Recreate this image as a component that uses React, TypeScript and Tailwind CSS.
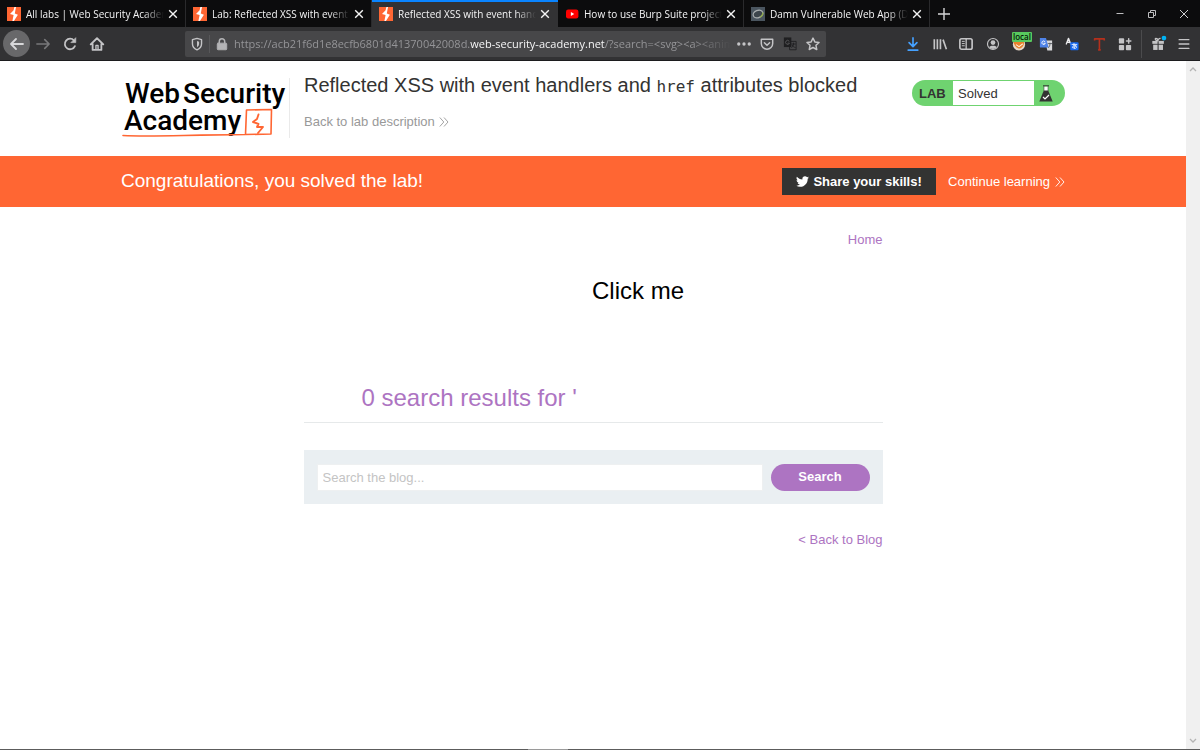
import React from "react";

const uiFont = "font-['Open_Sans','Noto_Sans',sans-serif]";

function BurpIcon() {
  return (
    <svg viewBox="0 0 14 14" className="size-[14px] shrink-0" aria-hidden="true">
      <rect width="14" height="14" fill="#ff6633" />
      <path d="M7.400 0 6.600 3.200 3 7l3.600 1L5.400 14h1.500l4-6.200L7.800 6.400 9 0Z" fill="#fff" />
    </svg>
  );
}

function YoutubeIcon() {
  return (
    <svg viewBox="0 0 14 14" className="size-[14px] shrink-0" aria-hidden="true">
      <rect x="1" y="2.6" width="12.4" height="8.8" rx="2.2" fill="#f00" />
      <path d="M5.9 5 L9.2 7 L5.9 9 Z" fill="#fff" />
    </svg>
  );
}

function DvwaIcon() {
  return (
    <svg viewBox="0 0 14 14" className="size-[14px] shrink-0" aria-hidden="true">
      <rect width="14" height="14" fill="#4a555f" />
      <ellipse cx="7" cy="7" rx="5" ry="3.600" transform="rotate(-22 7 7)" fill="#3c454c" stroke="#a9aeb0" strokeWidth="1.300" />
      <path d="M9 10.300 Q12 8.600 12 5.600" fill="none" stroke="#8fa84a" strokeWidth="1.300" />
    </svg>
  );
}

function CloseIcon() {
  return (
    <svg viewBox="0 0 10 10" className="size-[10px]" fill="none" stroke="#f4f4f4" strokeWidth="1.400" aria-hidden="true">
      <path d="M1.200 1.200 8.800 8.800M8.800 1.200 1.200 8.800" />
    </svg>
  );
}

const tabs = [
  { title: "All labs | Web Security Academy", icon: <BurpIcon /> },
  { title: "Lab: Reflected XSS with event handlers", icon: <BurpIcon /> },
  { title: "Reflected XSS with event handlers", icon: <BurpIcon />, active: true },
  { title: "How to use Burp Suite projects |", icon: <YoutubeIcon /> },
  { title: "Damn Vulnerable Web App (DVWA)", icon: <DvwaIcon /> },
];

function TabBar() {
  return (
    <div className="flex h-[27px] bg-[#0c0c0d]">
      {tabs.map((tab) => (
        <div
          key={tab.title}
          className={
            tab.active
              ? "flex w-[186px] items-center border-t-2 border-[#0a84ff] bg-[#323234] pr-2 pb-px pl-[7px]"
              : "flex w-[186px] items-center border-r border-[#2a2a2c] pt-px pr-[7px] pl-[7px]"
          }
        >
          {tab.icon}
          <button className="ml-[5px] h-5 min-w-0 flex-1 overflow-hidden text-left text-[10px] leading-5 whitespace-nowrap text-[#f4f4f5] mask-r-from-85% mask-r-to-100%">
            {tab.title}
          </button>
          <button aria-label="Close tab" className="ml-1 shrink-0">
            <CloseIcon />
          </button>
        </div>
      ))}
      <button aria-label="New tab" className="ml-2">
        <svg viewBox="0 0 12 12" className="size-3" stroke="#d6d6d8" strokeWidth="1.400" aria-hidden="true">
          <path d="M6 0V12M0 6H12" />
        </svg>
      </button>
      <div className="ml-auto flex items-center gap-[22px] pr-[11px]">
        <button aria-label="Minimize">
          <svg viewBox="0 0 10 10" className="size-[10px]" stroke="#bdbdbf" aria-hidden="true"><path d="M1.500 4.500H8.500" /></svg>
        </button>
        <button aria-label="Restore">
          <svg viewBox="0 0 10 10" className="size-[10px]" stroke="#bdbdbf" fill="none" aria-hidden="true">
            <path d="M1.500 3.500h5v5h-5zM3.500 3.500v-2h5v5h-2" />
          </svg>
        </button>
        <button aria-label="Close window">
          <svg viewBox="0 0 10 10" className="size-[10px]" stroke="#d0d0d2" aria-hidden="true"><path d="M1 1 9 9M9 1 1 9" /></svg>
        </button>
      </div>
    </div>
  );
}

type IconProps = { label: string; children: React.ReactNode };

function ToolButton({ label, children }: IconProps) {
  return (
    <button aria-label={label} className="shrink-0">
      <svg viewBox="0 0 16 16" className="size-[14px] overflow-visible" fill="none" stroke="#c4c4c6" strokeWidth="1.700" strokeLinecap="round" strokeLinejoin="round" aria-hidden="true">
        {children}
      </svg>
    </button>
  );
}

function Toolbar() {
  return (
    <div className="flex h-[34px] items-center border-b border-[#1c1c1e] bg-[#323234] pr-[9px] pl-[3px]">
      <button aria-label="Back" className="flex size-[27px] items-center justify-center rounded-full bg-[#68686a]">
        <svg viewBox="0 0 16 16" className="size-4" fill="none" stroke="#d8d8da" strokeWidth="1.800" strokeLinecap="round" strokeLinejoin="round" aria-hidden="true">
          <path d="M14 8H2M7 3 2 8l5 5" />
        </svg>
      </button>
      <div className="ml-[6px] flex items-center gap-[13px]">
        <button aria-label="Forward">
          <svg viewBox="0 0 16 16" className="size-[14px]" fill="none" stroke="#78787a" strokeWidth="1.800" strokeLinecap="round" strokeLinejoin="round" aria-hidden="true">
            <path d="M1 8H15M10 3l5 5-5 5" />
          </svg>
        </button>
        <ToolButton label="Reload">
          <path d="M13.600 10.400A6 6 0 1 1 12.600 4" strokeWidth="2" />
          <path d="M14.600 1.200V6.400H9.400Z" fill="#c4c4c6" strokeWidth="0.800" />
        </ToolButton>
        <ToolButton label="Home">
          <path d="M.8 8.400 8 1.400l7.200 7M3 8v6.800h10V8" strokeWidth="2.100" />
          <path d="M6.800 14V9.600h2.400V14" strokeWidth="1.600" />
        </ToolButton>
      </div>
      <div className="ml-[81px] flex h-[26px] min-w-0 flex-1 items-center rounded-[2px] bg-[#474749] pr-[6px] pl-[5px]">
        <ToolButton label="Tracking protection">
          <path d="M8 1.600 13.200 3v4.600c0 3.400-2.200 5.600-5.200 7-3-1.400-5.200-3.600-5.200-7V3Z" strokeWidth="1.600" />
          <path d="M8 4.600v7c1.500-1 2.400-2.200 2.400-4V5.300Z" fill="#c4c4c6" stroke="none" />
        </ToolButton>
        <div className="mx-[5px] h-[18px] w-px bg-[#58585a]" />
        <ToolButton label="Site information">
          <rect x="2.600" y="7" width="10.800" height="7.600" rx="1" fill="#b4b4b6" stroke="#b4b4b6" strokeWidth="1" />
          <path d="M4.900 7V5a3.100 3.100 0 0 1 6.200 0v2" stroke="#b4b4b6" />
        </ToolButton>
        <div className="ml-[5px] min-w-0 flex-1 overflow-hidden text-[11px] leading-5 whitespace-nowrap text-[#949497] mask-r-from-92% mask-r-to-100%">
          https://acb21f6d1e8ecfb6801d41370042008d.<span className="text-[#f5f5f6]">web-security-academy.net</span>/?search=&lt;svg&gt;&lt;a&gt;&lt;animate
        </div>
        <div className="ml-[6px] flex shrink-0 items-center gap-[9px]">
          <ToolButton label="Page actions">
            <g fill="#c4c4c6" stroke="none"><circle cx="2" cy="8" r="1.900" /><circle cx="8" cy="8" r="1.900" /><circle cx="14" cy="8" r="1.900" /></g>
          </ToolButton>
          <ToolButton label="Save to Pocket">
            <path d="M1.500 2.500h13v5a6.500 6.500 0 0 1-13 0Z" />
            <path d="m5 6.600 3 2.900 3-2.900" />
          </ToolButton>
          <ToolButton label="Translate page">
            <rect x="1" y="0.500" width="8.500" height="11" fill="#1f1f21" stroke="none" />
            <rect x="8" y="5" width="7" height="9.600" stroke="#1f1f21" strokeWidth="1" />
            <path d="M7 4.600a2.300 2.300 0 1 0 .4 2.400H5.700" stroke="#59595c" strokeWidth="1" />
            <path d="M10 8h4M12 7v1c0 2-1 3-2 4M10.500 9.500c1 1.500 2 2 3.500 2.500" stroke="#1f1f21" strokeWidth="1" />
          </ToolButton>
          <ToolButton label="Bookmark this page">
            <path d="m8 1.200 2.100 4.400 4.800.6-3.500 3.300.9 4.800L8 12l-4.300 2.300.9-4.800L1.100 6.200l4.800-.6Z" />
          </ToolButton>
        </div>
      </div>
      <div className="ml-20 flex w-[226px] shrink-0 items-center justify-between">
        <ToolButton label="Downloads"><path d="M8 1v9.500M3.500 6.500 8 11l4.500-4.500M2.500 15h11" stroke="#45a1ff" strokeWidth="1.900" /></ToolButton>
        <ToolButton label="Library"><path d="M1.500 2.500v11.500M5 2.500v11.500M8.500 2.500v11.500M11.500 3l3.800 11" strokeWidth="1.900" strokeLinecap="butt" /></ToolButton>
        <ToolButton label="Sidebars">
          <rect x="1" y="2" width="14" height="12" rx="2" strokeWidth="1.900" />
          <path d="M8.200 2.500v11" strokeWidth="1.500" />
          <path d="M3.700 5h2.400M3.700 7.500h2.400M3.700 10h2.400" strokeWidth="1.100" />
        </ToolButton>
        <ToolButton label="Account">
          <circle cx="8" cy="8" r="6.300" strokeWidth="1.300" />
          <circle cx="8" cy="6.300" r="2.700" fill="#c4c4c6" stroke="none" />
          <path d="M3.600 11.500c2-2 6.800-2 8.800 0-2 2.800-6.800 2.800-8.800 0Z" fill="#c4c4c6" stroke="none" />
        </ToolButton>
        <div className="relative flex">
          <ToolButton label="Proxy: local">
            <circle cx="8" cy="8.500" r="7" fill="#e9d9c8" stroke="none" />
            <path d="M1.500 5c3 1 5-2 12 0 1 5-3 9-6 8-3-1-5-4-6-8Z" fill="#e9822c" stroke="none" />
            <path d="m5 9 3 2 4-3" stroke="#fff1df" strokeWidth="1.200" />
          </ToolButton>
          <span className="absolute -top-[5px] left-0 flex h-[10px] items-center rounded-[1px] bg-[#58c95e] px-px text-[8px] leading-none font-semibold text-[#071907]">local</span>
        </div>
        <ToolButton label="Google Translate">
          <path d="M7 4h8v11.500H9.500Z" fill="#d9d9db" stroke="none" />
          <path d="M1 1h7l3 11H2a1 1 0 0 1-1-1Z" fill="#4f83e8" stroke="none" />
          <path d="M6.800 5.200a2 2 0 1 0 .4 2H5.600" stroke="#fff" strokeWidth="1" />
          <path d="M10.500 7.500h4M12.500 7v1c0 2-.8 3-1.500 4" stroke="#55585e" strokeWidth="1" />
        </ToolButton>
        <ToolButton label="Translate selection">
          <path d="M1.500 8 4 1.500 6.500 8M2.400 6h3.200" stroke="#ececee" strokeWidth="1.500" />
          <rect x="6" y="6" width="9.500" height="9" rx="1" fill="#1769ee" stroke="none" />
          <path d="M8 8.500h5.500M10.300 7.400c0 3 0 4 .5 5.800M12.500 9.400c-.8 3-4 4.200-4 2.200s4.800-2.200 4.800-.2c0 1-.7 1.500-1.500 1.600" stroke="#fff" strokeWidth="0.900" />
        </ToolButton>
        <ToolButton label="Text tools">
          <path d="M3 4V2.200h11V4M8.500 2v12.500M7 14.700h3" stroke="#b5301c" strokeWidth="1.900" strokeLinecap="butt" />
        </ToolButton>
        <ToolButton label="Add-ons">
          <g fill="#c4c4c6" stroke="none">
            <rect x="1" y="1.500" width="6" height="6" rx="1" /><rect x="1" y="9" width="6" height="6" rx="1" /><rect x="9" y="9" width="6" height="6" rx="1" />
          </g>
          <path d="M12.200 2v5M9.700 4.500h5" />
        </ToolButton>
      </div>
      <div className="mx-[9px] h-7 w-px bg-[#4b4b4d]" />
      <div className="flex shrink-0 items-center gap-3">
        <ToolButton label="What's new">
          <g fill="#c4c4c6" stroke="none">
            <rect x="1.500" y="4.500" width="6" height="3.300" /><rect x="8.700" y="4.500" width="6" height="3.300" />
            <rect x="2.500" y="8.800" width="5" height="6" /><rect x="8.700" y="8.800" width="5" height="6" />
          </g>
          <path d="M8 4.500C5 4.500 4 1.500 5.500 1.500S8 3 8 4.500C8 3 9 1.500 10.500 1.500" strokeWidth="1.300" />
          <circle cx="14.800" cy="1.200" r="2.700" fill="#00b3f4" stroke="none" />
        </ToolButton>
        <ToolButton label="Menu"><path d="M2.500 3h11M2.500 8h11M2.500 13h11" /></ToolButton>
      </div>
    </div>
  );
}

function AcademyLogo() {
  return (
    <svg viewBox="0 0 168 60" className="h-[60px] w-[168px]" role="img" aria-label="Web Security Academy">
      <g className="font-['Roboto',sans-serif] text-[28px] font-medium" fill="#000">
        <text x="4" y="25">Web</text>
        <text x="62" y="25">Security</text>
        <text x="3" y="52">Academy</text>
      </g>
      <g fill="none" stroke="#ff6633" strokeLinejoin="round" strokeLinecap="round">
        <path d="M2 57.500C30 59 60 57 124.500 56.500L125.500 32l25-.5-.5 24.500-26 .5" strokeWidth="1.600" />
        <path d="M137.500 36.500 136 41l-4 3 5.500 2-1.500 3h6l-5 6" strokeWidth="1.900" />
      </g>
    </svg>
  );
}

function Chevrons() {
  return (
    <svg viewBox="0 0 10 12" className="h-3 w-[10px]" fill="none" stroke="currentColor" strokeWidth="0.900" aria-hidden="true">
      <path d="M.8 1.500 4.800 6l-4 4.500M5 1.500 9 6l-4 4.500" />
    </svg>
  );
}

function LabHeader() {
  return (
    <header className="mx-auto flex h-[95px] w-full max-w-[944px] items-start">
      <div className="mt-[17px] border-r border-[#eaeaea]"><AcademyLogo /></div>
      <div className="ml-[14px] pt-[10px]">
        <h1 className="h-7 text-[20px] leading-7 whitespace-nowrap text-[#333332]">
          Reflected XSS with event handlers and <code className="font-['DejaVu_Sans_Mono',monospace] text-[16px]">href</code> attributes blocked
        </h1>
        <a href="#lab" className="mt-[13px] flex items-center gap-1 text-[13px] leading-5 text-[#999]">
          Back to lab description <Chevrons />
        </a>
      </div>
      <div className="mt-[19px] ml-auto flex h-[26px] w-[153px] items-stretch overflow-hidden rounded-full bg-[#6fd370] text-[#333332]">
        <strong className="w-[41px] pl-[7px] text-[13px] leading-[27px]">LAB</strong>
        <span className="my-px flex-1 bg-white pl-[5px] text-[13px] leading-[25px]">Solved</span>
        <span className="flex w-[31px] items-center pl-[5px]">
          <svg viewBox="0 0 14 17" className="h-[17px] w-[14px]" aria-hidden="true">
            <path d="M5 1.500h4v6H5z" fill="#fff" />
            <path d="M4 .8h6" stroke="#333332" strokeWidth="1" />
            <path d="M5 1v5M9 1v5" stroke="#333332" strokeWidth=".5" />
            <path d="M4.800 5.500h4.400L13.700 16.500H.3Z" fill="#333332" />
            <path d="m4 12 2 2 4-4" fill="none" stroke="#fff" strokeWidth="1.200" />
          </svg>
        </span>
      </div>
    </header>
  );
}

function SolvedBanner() {
  return (
    <section className="bg-[#ff6633] text-white">
      <div className="mx-auto flex h-[51px] w-full max-w-[944px] items-center">
        <h2 className="text-[19px]">Congratulations, you solved the lab!</h2>
        <button className="ml-auto flex h-[27px] w-[154px] items-center justify-center gap-1 bg-[#333332] text-[13px] font-bold whitespace-nowrap">
          <svg viewBox="0 0 24 24" className="size-[13px]" fill="#fff" aria-hidden="true">
            <path d="M23.950 4.570a10 10 0 0 1-2.820.770 4.960 4.960 0 0 0 2.160-2.720c-.950.550-2 .950-3.130 1.180a4.920 4.920 0 0 0-8.380 4.480C7.690 8.100 4.070 6.130 1.640 3.160a4.820 4.820 0 0 0-.670 2.480c0 1.710.870 3.210 2.190 4.100a4.900 4.900 0 0 1-2.230-.620v.060a4.920 4.920 0 0 0 3.950 4.830 5 5 0 0 1-2.210.080 4.940 4.940 0 0 0 4.600 3.420A9.870 9.870 0 0 1 0 19.540a14 14 0 0 0 7.550 2.210c9.050 0 14-7.500 14-13.990 0-.210 0-.420-.020-.630a9.940 9.940 0 0 0 2.460-2.550Z" />
          </svg>
          Share your skills!
        </button>
        <a href="#continue" className="ml-3 flex items-center gap-[5px] text-[13px] whitespace-nowrap">
          Continue learning <Chevrons />
        </a>
      </div>
    </section>
  );
}

function BlogSearch() {
  return (
    <main className="mx-auto flex w-full max-w-[579px] flex-col pt-[23px] text-[13px] leading-5">
      <a href="#home" className="self-end text-[#ad74c2]">Home</a>
      <h1 className="mt-8 pl-[58px] text-[24px] leading-8 text-[#ad74c2]">
        <svg viewBox="0 0 350 100" className="h-[100px] w-[350px] overflow-hidden">
          <a href="#click"><text x="230" y="17" fill="#000" className="text-[24px]">Click me</text></a>
        </svg>
        0 search results for '
      </h1>
      <hr className="mt-2 border-[#e6e9ea]" />
      <form className="mt-[27px] flex h-[54px] items-center gap-2 bg-[#eaeff2] px-[13px]" onSubmit={(e) => e.preventDefault()}>
        <input aria-label="Search the blog" placeholder="Search the blog..." className="h-[27px] min-w-0 flex-1 border border-[#eef0f1] bg-white px-[5px] text-[13px] placeholder:text-[#c4c4c4]" />
        <button className="h-[27px] w-[99px] rounded-full bg-[#ad74c2] text-[13px] font-bold text-white">Search</button>
      </form>
      <a href="#blog" className="mt-[26px] self-end text-[#ad74c2]">&lt; Back to Blog</a>
    </main>
  );
}

export default function App() {
  return (
    <div className="flex h-screen flex-col bg-white font-['Liberation_Sans',Arial,sans-serif]">
      <div className={uiFont}>
        <TabBar />
        <Toolbar />
      </div>
      <div className="flex min-h-0 flex-1">
        <div className="min-w-0 flex-1 overflow-hidden">
          <LabHeader />
          <SolvedBanner />
          <BlogSearch />
        </div>
        <div className="flex w-[14px] flex-col items-center justify-between bg-[#f0f0f0] py-1">
          <svg viewBox="0 0 8 8" className="size-2" fill="none" stroke="#b4b4b4" strokeWidth="1.300" aria-hidden="true"><path d="m1 6 3-3 3 3" /></svg>
          <svg viewBox="0 0 8 8" className="size-2" fill="none" stroke="#b4b4b4" strokeWidth="1.300" aria-hidden="true"><path d="m1 2 3 3 3-3" /></svg>
        </div>
      </div>
      <div className="flex h-px bg-[#5c5c5c]">
        <div className="ml-[44%] w-10 bg-[#9a9a9a]" />
      </div>
    </div>
  );
}
